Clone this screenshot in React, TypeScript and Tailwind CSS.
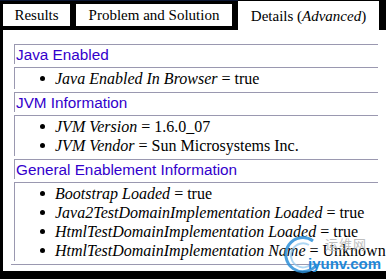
import React from 'react';

const sections = [
    {
        title: 'Java Enabled',
        items: [{ key: 'Java Enabled In Browser', value: 'true' }],
    },
    {
        title: 'JVM Information',
        items: [
            { key: 'JVM Version', value: '1.6.0_07' },
            { key: 'JVM Vendor', value: 'Sun Microsystems Inc.' },
        ],
    },
    {
        title: 'General Enablement Information',
        items: [
            { key: 'Bootstrap Loaded', value: 'true' },
            { key: 'Java2TestDomainImplementation Loaded', value: 'true' },
            { key: 'HtmlTestDomainImplementation Loaded', value: 'true' },
            { key: 'HtmlTestDomainImplementation Name', value: 'Unknown' },
        ],
    },
];

export default function App() {
    return (
        <div className="relative h-[279px] w-[386px] overflow-hidden bg-black pl-[3px] font-['Liberation_Serif',serif] text-black">
            {/* top navy strip */}
            <div className="absolute left-0 top-0 h-[1px] w-[238px] bg-[#0b1633]" />

            {/* Tabs */}
            <div className="flex h-[30px] items-start gap-[6px] text-[15px] leading-[19px]">
                <div className="mt-[4px] flex h-[22px] w-[67px] items-center justify-center bg-white">Results</div>
                <div className="mt-[4px] flex h-[22px] w-[156px] items-center justify-center bg-white">Problem and Solution</div>
                <div className="mt-[1px] flex h-[29px] w-[141px] items-start justify-center bg-white pt-[6px]">
                    <span>
                        Details (<i>Advanced</i>)
                    </span>
                </div>
            </div>

            {/* Content panel */}
            <div className="h-[241px] w-[383px] bg-white px-[8px] pt-[14px]">
                {sections.map((s, i) => (
                    <div key={s.title} className={i === 0 ? 'ml-[3px]' : 'ml-[3px] mt-[3px]'}>
                        <div className="h-[20px] border-l border-t border-[#9a98b0] pl-[1px] font-['Liberation_Sans',sans-serif] text-[15.3px] leading-[19px] text-[#3300cc]">
                            {s.title}
                        </div>
                        <ul className="mt-[3px] border-l border-t border-[#9a98b0] py-[1px]">
                            {s.items.map((it) => (
                                <li key={it.key} className="flex h-[19px] items-center whitespace-nowrap text-[16px] leading-[19px]">
                                    <span className="ml-[25px] mr-[10px] h-[5px] w-[5px] shrink-0 rounded-full bg-black" />
                                    <span>
                                        <i>{it.key}</i> = {it.value}
                                    </span>
                                </li>
                            ))}
                        </ul>
                    </div>
                ))}
                <div className="mt-[3px] border-t border-[#9a98b0]" />
            </div>

            {/* watermark */}
            <div className="pointer-events-none absolute left-[283px] top-[236px] h-[38px] w-[100px]">
                <svg className="absolute left-0 top-0" width="40" height="38" viewBox="0 0 40 38">
                    <path d="M30 5 A17 17 0 1 0 34 28" fill="none" stroke="#2b8fd8" strokeWidth="3" opacity="0.85" />
                    <path d="M26 9 A12 12 0 1 0 30 26" fill="none" stroke="#8cc6ee" strokeWidth="2" opacity="0.7" />
                </svg>
                <div className="absolute left-[42px] top-[1px] font-['Noto_Sans_CJK_SC',sans-serif] text-[13px] leading-[14px] tracking-[1px] text-[#b8b8b8] opacity-90">
                    运维网
                </div>
                <div className="absolute left-[25px] top-[20px] font-['Liberation_Sans',sans-serif] text-[15px] font-bold leading-[15px] text-[#1e88d8]">
                    iyunv.com
                </div>
            </div>
        </div>
    );
}
